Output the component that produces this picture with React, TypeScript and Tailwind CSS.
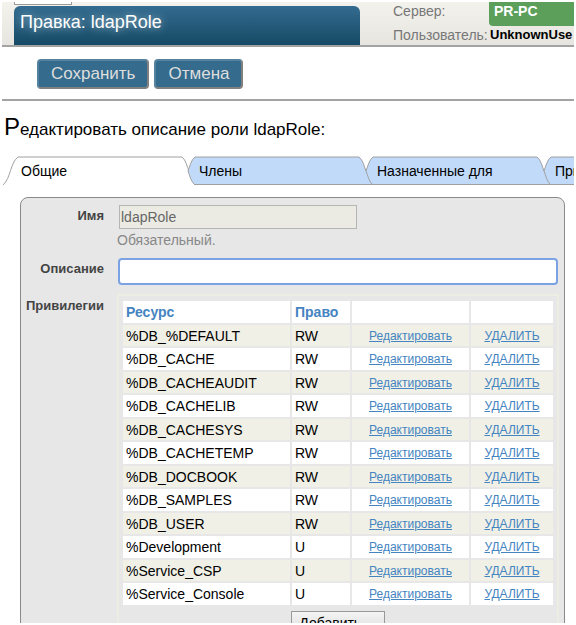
import React, { useState } from "react";

interface IPrivilege {
  resource: string;
  permission: string;
}

const privileges: IPrivilege[] = [
  { resource: "%DB_%DEFAULT", permission: "RW" },
  { resource: "%DB_CACHE", permission: "RW" },
  { resource: "%DB_CACHEAUDIT", permission: "RW" },
  { resource: "%DB_CACHELIB", permission: "RW" },
  { resource: "%DB_CACHESYS", permission: "RW" },
  { resource: "%DB_CACHETEMP", permission: "RW" },
  { resource: "%DB_DOCBOOK", permission: "RW" },
  { resource: "%DB_SAMPLES", permission: "RW" },
  { resource: "%DB_USER", permission: "RW" },
  { resource: "%Development", permission: "U" },
  { resource: "%Service_CSP", permission: "U" },
  { resource: "%Service_Console", permission: "U" },
];

const tabs = ["Общие", "Члены", "Назначенные для", "При"];

const Header = () => (
  <header className="flex h-[45px] border-b-2 border-[#a3a3a3] bg-linear-to-b from-[#f3f2ed] to-[#e6e5e0]">
    <div className="ml-3 flex w-[346px] shrink-0 flex-col">
      <div className="mb-px h-[3px] w-[58px] border-x border-b border-[#999] bg-white" />
      <h1 className="flex-1 rounded-t-md bg-linear-to-b from-[#336b90] to-[#164a65] px-[6px] text-[18px] leading-[32px] text-white [text-shadow:0_0_8px_#a8c4d4]">
        Правка: ldapRole
      </h1>
    </div>
    <dl className="ml-[33px] grid min-w-0 flex-1 grid-cols-[96px_1fr] content-start overflow-hidden text-[14px] leading-[18px] whitespace-nowrap text-[#777]">
      <dt>Сервер:</dt>
      <dd className="h-6 rounded-bl-sm bg-[#5b9f5b] px-[5px] font-bold text-white">PR-PC</dd>
      <dt>Пользователь:</dt>
      <dd className="pl-px text-[13px] font-bold text-black">UnknownUse</dd>
    </dl>
  </header>
);

const ToolButton = ({ children }: { children: React.ReactNode }) => (
  <button
    type="button"
    className="h-[30px] rounded border-2 border-t-[#55829f] border-r-[#808080] border-b-[#808080] border-l-[#55829f] bg-[#356b8d] px-3 text-[17px] leading-[26px] text-[#dedede]"
  >
    {children}
  </button>
);

// slanted outline, it overlaps the neighbours by half of the slope
const TabShape = ({ active, first }: { active: boolean; first: boolean }) => (
  <svg className="absolute top-0 left-0 -z-10" width="188" height="30" fill="none">
    <path
      d={
        first
          ? "M0 29C8 22 7 7 15 1H179C183 4 184 11 187 15L187 29Z"
          : "M8 1H172C176 4 177 10 179 15C181 21 183 26 187 29H8C4 26 3 20 1 15C3 10 4 4 8 1Z"
      }
      fill={active ? "#fff" : "#c1daf9"}
    />
    <path
      d={
        first
          ? "M0 29C8 22 7 7 15 1H179C183 4 184 11 186 15"
          : "M8 29C4 26 3 20 1 15C3 10 4 4 8 1H172C176 4 177 10 179 15"
      }
      stroke="#a0a0a0"
    />
    {!active && <path d="M8 28.5H187" stroke="#a0a0a0" />}
  </svg>
);

const TabBar = () => {
  const [current, setCurrent] = useState(0);

  return (
    <div role="tablist" className="isolate mt-[10px] flex overflow-hidden pl-px">
      {tabs.map((tab, index) => (
        <button
          key={tab}
          type="button"
          role="tab"
          aria-selected={index === current}
          onClick={() => setCurrent(index)}
          className={`relative z-0 h-[30px] shrink-0 text-left text-[14px] text-black ${
            index === 0 ? "w-[184px] pl-[18px]" : "w-[178px] pl-3"
          }`}
        >
          <TabShape active={index === current} first={index === 0} />
          {tab}
        </button>
      ))}
    </div>
  );
};

const PrivilegeTable = () => (
  <table className="w-full table-fixed border-separate border-spacing-[2px] text-left text-[14px] leading-5">
    <colgroup>
      <col />
      <col className="w-[58px]" />
      <col className="w-[117px]" />
      <col className="w-[82px]" />
    </colgroup>
    <thead>
      <tr className="h-[22px] bg-white text-[#4484c1]">
        <th className="px-[3px] py-0">Ресурс</th>
        <th className="px-[3px] py-0">Право</th>
        <td />
        <td />
      </tr>
    </thead>
    <tbody>
      {privileges.map((item) => (
        <tr key={item.resource} className="odd:h-[21px] even:h-[22px] odd:bg-[#f0f0e6] even:bg-white">
          <td className="px-[3px] py-0">{item.resource}</td>
          <td className="px-[3px] py-0">{item.permission}</td>
          <td className="p-0 text-center text-[12px]">
            <a href="#edit" className="text-[#4484c1] underline">
              Редактировать
            </a>
          </td>
          <td className="p-0 text-center text-[12px]">
            <a href="#delete" className="text-[#4484c1] underline">
              УДАЛИТЬ
            </a>
          </td>
        </tr>
      ))}
    </tbody>
  </table>
);

const RoleForm = () => (
  <form className="mt-[11px] mr-[9px] ml-[18px] grid grid-cols-[83px_1fr] gap-x-[13px] rounded-t-lg border border-[#8a8a8a] bg-[#e7e7e7] pr-[5px] text-[14px]">
    <label htmlFor="name" className="pt-2 text-right text-[13px] font-bold text-[#444]">
      Имя
    </label>
    <div className="pt-[7px]">
      <input
        id="name"
        defaultValue="ldapRole"
        readOnly
        className="ml-[2px] block h-6 w-[238px] border border-[#b5b5b5] bg-[#ebebe3] px-px text-[#666]"
      />
      <p className="leading-[22px] text-[#888]">Обязательный.</p>
    </div>

    <label htmlFor="description" className="pt-2 text-right text-[13px] font-bold text-[#444]">
      Описание
    </label>
    <div className="pt-[7px] pr-px pl-px">
      <input
        id="description"
        className="block h-[27px] w-full rounded-sm border-2 border-[#7ba3e3] bg-white px-px outline-none"
      />
    </div>

    <div className="pt-[11px] text-right text-[13px] font-bold text-[#444]">Привилегии</div>
    <div className="mt-[9px] border-2 border-[#eeede4] px-[2px] pt-[3px]">
      <PrivilegeTable />
      <div className="mt-1 flex justify-center pb-4">
        <button
          type="button"
          className="h-6 w-[94px] border border-[#999] bg-linear-to-b from-[#f4f4f4] to-[#dcdcdc] text-[14px] leading-5 text-black"
        >
          Добавить ...
        </button>
      </div>
    </div>
  </form>
);

export default function App() {
  return (
    <div className="h-screen overflow-hidden bg-white p-[2px] font-['Liberation_Sans',Arial,sans-serif] text-black">
      <div className="h-full overflow-hidden">
        <Header />
        <div className="flex gap-[5px] border-b-2 border-[#a3a3a3] px-[35px] pt-3 pb-[10px]">
          <ToolButton>Сохранить</ToolButton>
          <ToolButton>Отмена</ToolButton>
        </div>
        <h2 className="mt-[10px] pl-[2px] text-[17px] leading-[32px] first-letter:text-[24px]">
          Редактировать описание роли ldapRole:
        </h2>
        <TabBar />
        <RoleForm />
      </div>
    </div>
  );
}
